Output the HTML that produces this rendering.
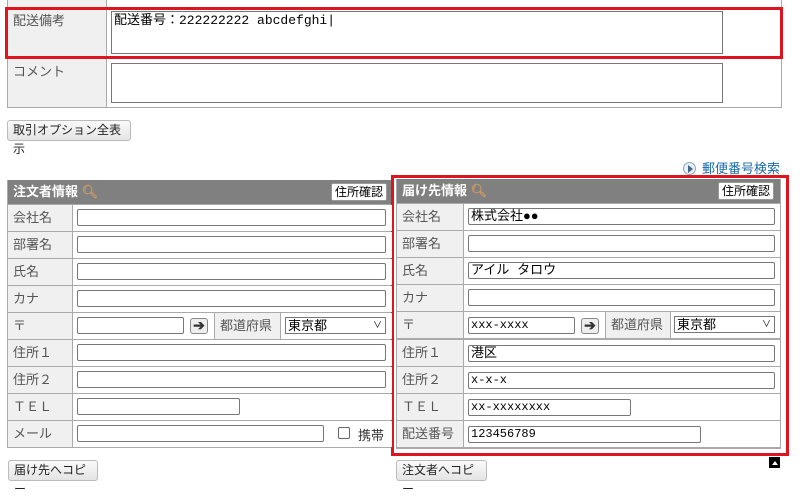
<!DOCTYPE html>
<html><head><meta charset="utf-8"><style>
*{box-sizing:border-box;margin:0;padding:0}
body{width:800px;height:485px;background:#fff;position:relative;overflow:hidden;font-family:"Liberation Sans","Noto Sans CJK JP",sans-serif;font-size:13px;color:#333}
.a{position:absolute}
.lbl{position:absolute;background:#f0f0f0;color:#555;padding-left:5px;font-size:13px}
.cell{position:absolute;background:#fff}
.inp{position:absolute;height:17px;border:1px solid #777;border-radius:2px;background:#fff;font-size:12px;line-height:15px;padding-left:2px;color:#000;font-family:"Liberation Mono","Noto Sans CJK JP",monospace;white-space:nowrap}
.btn{position:absolute;height:21px;border:1px solid #bbb;border-radius:3px;background:linear-gradient(#fafafa,#e4e4e4);font-size:12px;line-height:19px;padding:0 5px;color:#222}
.hdr{position:absolute;background:#808080;color:#fff;font-weight:bold;font-size:13px;line-height:24px;padding-left:5px}
.conf{position:absolute;background:#fff;color:#000;font-size:12px;line-height:16px;padding:0 3px;border:1px solid #999;border-radius:2px;font-weight:normal}
.red{position:absolute;border:3px solid #e0141e}
</style></head><body>
<!-- top table -->
<div class="a" style="left:7px;top:0;width:775px;height:108px;background:#aaa"></div>
<div class="lbl" style="left:8px;top:0;width:98px;height:7px"></div>
<div class="cell" style="left:107px;top:0;width:674px;height:7px"></div>
<div class="lbl" style="left:8px;top:8px;width:98px;height:50px;line-height:26px">配送備考</div>
<div class="cell" style="left:107px;top:8px;width:674px;height:50px"></div>
<div class="lbl" style="left:8px;top:59px;width:98px;height:48px;line-height:26px">コメント</div>
<div class="cell" style="left:107px;top:59px;width:674px;height:48px"></div>
<div class="inp" style="left:111px;top:11px;width:612px;height:43px;font-size:13px;line-height:18px;border-radius:0">配送番号：222222222 abcdefghi|</div>
<div class="inp" style="left:111px;top:63px;width:612px;height:40px;border-radius:0"></div>
<div class="red" style="left:5px;top:7px;width:778px;height:52px"></div>
<div class="btn" style="left:7px;top:120px;width:124px">取引オプション全表示</div>
<div class="a" style="left:683px;top:158px;color:#1a6aa8;font-size:13px"><span style="display:inline-block;width:13px;height:13px;border-radius:50%;border:1px solid #8ab;background:#e8f0f8;vertical-align:-2px;margin-right:6px;position:relative"><span style="position:absolute;left:4px;top:2px;border-left:5px solid #468;border-top:4px solid transparent;border-bottom:4px solid transparent"></span></span>郵便番号検索</div>

<!-- left table -->
<div class="a" style="left:7px;top:180px;width:386px;height:268px;background:#aaa"></div>
<div class="hdr" style="left:8px;top:180px;width:384px;height:24px">注文者情報 <span style="color:#c96">&#x1F50D;&#xFE0E;</span><div class="conf" style="left:323px;top:3px">住所確認</div></div>
<div id="L"></div>
<!-- right table -->
<div class="a" style="left:396px;top:179px;width:385px;height:270px;background:#aaa"></div>
<div class="hdr" style="left:397px;top:179px;width:383px;height:24px">届け先情報 <span style="color:#c96">&#x1F50D;&#xFE0E;</span><div class="conf" style="left:321px;top:3px">住所確認</div></div>
<div class="red" style="left:391px;top:175px;width:398px;height:281px"></div>
<div class="btn" style="left:8px;top:460px;width:90px">届け先へコピー</div>
<div class="btn" style="left:396px;top:460px;width:91px">注文者へコピー</div>
<div class="a" style="left:769px;top:457px;width:11px;height:11px;background:#000;border:1px solid #000"><div style="position:absolute;left:2px;top:3px;border-bottom:4px solid #fff;border-left:3px solid transparent;border-right:3px solid transparent"></div></div>

<!-- left rows -->
<div class="lbl" style="left:8px;top:205px;width:64px;height:26px;line-height:26px">会社名</div><div class="cell" style="left:73px;top:205px;width:319px;height:26px"></div><div class="inp" style="left:77px;top:209px;width:309px"></div>
<div class="lbl" style="left:8px;top:232px;width:64px;height:26px;line-height:26px">部署名</div><div class="cell" style="left:73px;top:232px;width:319px;height:26px"></div><div class="inp" style="left:77px;top:236px;width:309px"></div>
<div class="lbl" style="left:8px;top:259px;width:64px;height:26px;line-height:26px">氏名</div><div class="cell" style="left:73px;top:259px;width:319px;height:26px"></div><div class="inp" style="left:77px;top:263px;width:309px"></div>
<div class="lbl" style="left:8px;top:286px;width:64px;height:26px;line-height:26px">カナ</div><div class="cell" style="left:73px;top:286px;width:319px;height:26px"></div><div class="inp" style="left:77px;top:290px;width:309px"></div>
<div class="lbl" style="left:8px;top:313px;width:64px;height:26px;line-height:26px">〒</div><div class="cell" style="left:73px;top:313px;width:141px;height:26px"></div><div class="inp" style="left:77px;top:317px;width:107px"></div>
<div class="a" style="left:190px;top:318px;width:18px;height:16px;border:1px solid #888;border-radius:3px;background:#eee;font-size:14px;line-height:13px;text-align:center;color:#333;font-weight:bold">➔</div>
<div class="lbl" style="left:215px;top:313px;width:65px;height:26px;line-height:26px;color:#555">都道府県</div><div class="cell" style="left:281px;top:313px;width:111px;height:26px"></div>
<div class="inp" style="left:285px;top:317px;width:101px;height:17px;border-radius:0;font-family:'Liberation Sans','Noto Sans CJK JP',sans-serif;font-size:13px">東京都<span style="position:absolute;right:3px;font-size:9px">&#x2228;</span></div>
<div class="lbl" style="left:8px;top:340px;width:64px;height:26px;line-height:26px">住所１</div><div class="cell" style="left:73px;top:340px;width:319px;height:26px"></div><div class="inp" style="left:77px;top:344px;width:309px"></div>
<div class="lbl" style="left:8px;top:367px;width:64px;height:26px;line-height:26px">住所２</div><div class="cell" style="left:73px;top:367px;width:319px;height:26px"></div><div class="inp" style="left:77px;top:371px;width:309px"></div>
<div class="lbl" style="left:8px;top:394px;width:64px;height:26px;line-height:26px">ＴＥＬ</div><div class="cell" style="left:73px;top:394px;width:319px;height:26px"></div><div class="inp" style="left:77px;top:398px;width:163px"></div>
<div class="lbl" style="left:8px;top:421px;width:64px;height:26px;line-height:26px">メール</div><div class="cell" style="left:73px;top:421px;width:319px;height:26px"></div><div class="inp" style="left:77px;top:425px;width:247px"></div>
<div class="a" style="left:338px;top:427px;width:12px;height:12px;border:1px solid #666;border-radius:2px"></div><div class="a" style="left:358px;top:425px;color:#333">携帯</div>

<!-- right rows -->
<div class="lbl" style="left:397px;top:204px;width:66px;height:26px;line-height:26px">会社名</div><div class="cell" style="left:464px;top:204px;width:316px;height:26px"></div><div class="inp" style="left:468px;top:208px;width:307px;font-size:13px">株式会社●●</div>
<div class="lbl" style="left:397px;top:231px;width:66px;height:26px;line-height:26px">部署名</div><div class="cell" style="left:464px;top:231px;width:316px;height:26px"></div><div class="inp" style="left:468px;top:235px;width:307px"></div>
<div class="lbl" style="left:397px;top:258px;width:66px;height:26px;line-height:26px">氏名</div><div class="cell" style="left:464px;top:258px;width:316px;height:26px"></div><div class="inp" style="left:468px;top:262px;width:307px;font-size:13px">アイル タロウ</div>
<div class="lbl" style="left:397px;top:285px;width:66px;height:26px;line-height:26px">カナ</div><div class="cell" style="left:464px;top:285px;width:316px;height:26px"></div><div class="inp" style="left:468px;top:289px;width:307px"></div>
<div class="lbl" style="left:397px;top:312px;width:66px;height:26px;line-height:26px">〒</div><div class="cell" style="left:464px;top:312px;width:141px;height:26px"></div><div class="inp" style="left:468px;top:317px;width:107px">xxx-xxxx</div>
<div class="a" style="left:581px;top:318px;width:18px;height:16px;border:1px solid #888;border-radius:3px;background:#eee;font-size:14px;line-height:13px;text-align:center;color:#333;font-weight:bold">➔</div>
<div class="lbl" style="left:606px;top:312px;width:64px;height:26px;line-height:26px">都道府県</div><div class="cell" style="left:671px;top:312px;width:109px;height:26px"></div>
<div class="inp" style="left:674px;top:316px;width:101px;height:17px;border-radius:0;font-family:'Liberation Sans','Noto Sans CJK JP',sans-serif;font-size:13px">東京都<span style="position:absolute;right:3px;font-size:9px">&#x2228;</span></div>
<div class="lbl" style="left:397px;top:340px;width:66px;height:26px;line-height:26px">住所１</div><div class="cell" style="left:464px;top:340px;width:316px;height:26px"></div><div class="inp" style="left:468px;top:345px;width:307px;font-size:13px">港区</div>
<div class="lbl" style="left:397px;top:367px;width:66px;height:26px;line-height:26px">住所２</div><div class="cell" style="left:464px;top:367px;width:316px;height:26px"></div><div class="inp" style="left:468px;top:372px;width:307px">x-x-x</div>
<div class="lbl" style="left:397px;top:394px;width:66px;height:26px;line-height:26px">ＴＥＬ</div><div class="cell" style="left:464px;top:394px;width:316px;height:26px"></div><div class="inp" style="left:468px;top:399px;width:163px">xx-xxxxxxxx</div>
<div class="lbl" style="left:397px;top:421px;width:66px;height:26px;line-height:26px">配送番号</div><div class="cell" style="left:464px;top:421px;width:316px;height:26px"></div><div class="inp" style="left:468px;top:426px;width:233px">123456789</div>
</body></html>
